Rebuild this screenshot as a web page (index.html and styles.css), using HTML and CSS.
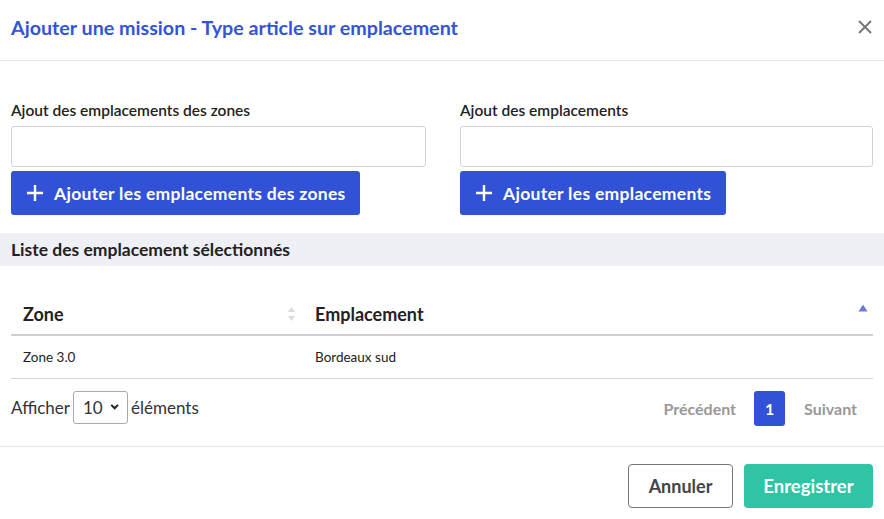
FILE: index.html
```html
<!DOCTYPE html>
<html lang="fr">
<head>
<meta charset="utf-8">
<link rel="stylesheet" href="styles.css">
</head>
<body>
<div class="modal">
  <header class="modal-header">
    <h1 class="modal-title">Ajouter une mission - Type article sur emplacement</h1>
    <button class="close" aria-label="Fermer">
      <svg width="14" height="14" viewBox="0 0 14 14"><path d="M1 1L13 13M13 1L1 13" stroke="#777" stroke-width="2" fill="none"/></svg>
    </button>
  </header>
  <div class="modal-body">
    <div class="fields">
      <div class="field field-left">
        <label class="label">Ajout des emplacements des zones</label>
        <input class="input" type="text">
        <button class="btn-primary btn-zones"><span class="plus"><svg width="18" height="18" viewBox="0 0 18 18"><path d="M9 1V17M1 9H17" stroke="#fff" stroke-width="2.4"/></svg></span>Ajouter les emplacements des zones</button>
      </div>
      <div class="field field-right">
        <label class="label">Ajout des emplacements</label>
        <input class="input" type="text">
        <button class="btn-primary btn-empl"><span class="plus"><svg width="18" height="18" viewBox="0 0 18 18"><path d="M9 1V17M1 9H17" stroke="#fff" stroke-width="2.4"/></svg></span>Ajouter les emplacements</button>
      </div>
    </div>
    <div class="section-bar">Liste des emplacement sélectionnés</div>
    <div class="table-wrap">
      <table class="table">
        <thead>
          <tr>
            <th class="col-zone">Zone<span class="sort-both"><svg width="9" height="16" viewBox="0 0 9 16"><path d="M4.5 1L8 6H1Z M4.5 15L8 10H1Z" fill="#dcdcdc"/></svg></span></th>
            <th class="col-empl">Emplacement<span class="sort-asc"><svg width="10" height="8" viewBox="0 0 10 8"><path d="M5 0.5L9.5 7.5H0.5Z" fill="#6a78d8"/></svg></span></th>
          </tr>
        </thead>
        <tbody>
          <tr>
            <td>Zone 3.0</td>
            <td>Bordeaux sud</td>
          </tr>
        </tbody>
      </table>
      <div class="table-footer">
        <div class="length">
          <span>Afficher</span>
          <span class="select">10<svg width="11" height="8" viewBox="0 0 11 8"><path d="M1.5 1.5L5.5 5.5L9.5 1.5" stroke="#222" stroke-width="2.4" fill="none"/></svg></span>
          <span>éléments</span>
        </div>
        <div class="pagination">
          <span class="page-link disabled">Précédent</span>
          <span class="page-current">1</span>
          <span class="page-link disabled">Suivant</span>
        </div>
      </div>
    </div>
  </div>
  <footer class="modal-footer">
    <button class="btn-cancel">Annuler</button>
    <button class="btn-save">Enregistrer</button>
  </footer>
</div>
</body>
</html>
```

FILE: styles.css
```css
* { box-sizing: border-box; }
html, body { margin: 0; padding: 0; background: #fff; }
body {
  font-family: Lato, "Open Sans", "Liberation Sans", sans-serif;
  color: #222;
  width: 884px;
  height: 519px;
  overflow: hidden;
}
.modal { width: 884px; }
.modal-header {
  height: 61px;
  display: flex;
  align-items: center;
  justify-content: space-between;
  padding: 0 12px 6px 11px;
  border-bottom: 1px solid #e1e5ec;
}
.modal-title {
  margin: 0;
  font-size: 19.7px;
  font-weight: 700;
  color: #3553d6;
}
.close {
  border: 0;
  background: none;
  padding: 0;
  width: 14px;
  height: 14px;
  display: flex;
}
.modal-body { padding: 40px 0 0; }
.fields {
  display: flex;
  padding: 0 11px;
  gap: 34px;
}
.field { display: flex; flex-direction: column; align-items: flex-start; }
.field-left { width: 415px; }
.field-right { width: 413px; }
.label {
  font-size: 15.5px;
  font-weight: 600;
  color: #222;
  line-height: 18px;
  margin-bottom: 7px;
}
.input {
  width: 100%;
  height: 41px;
  border: 1px solid #d4d4d4;
  border-radius: 3px;
  margin: 0 0 4px;
}
.btn-primary {
  height: 44px;
  border: 0;
  border-radius: 3px;
  background: #3152d6;
  color: #fff;
  font-family: inherit;
  font-size: 17.5px;
  font-weight: 700;
  display: flex;
  align-items: center;
  padding: 0 10px 0 15px;
  letter-spacing: 0.3px;
  white-space: nowrap;
}
.btn-zones { width: 349px; }
.btn-empl { width: 266px; }
.plus { display: flex; margin-right: 10px; }
.section-bar {
  margin-top: 18px;
  height: 33px;
  background: #eef0f5;
  font-size: 17.5px;
  font-weight: 700;
  color: #222;
  padding: 0 11px;
  display: flex;
  align-items: center;
}
.table-wrap { padding: 27px 11px 0; }
.table {
  width: 100%;
  border-collapse: collapse;
}
.table th {
  text-align: left;
  font-size: 18px;
  font-weight: 700;
  color: #222;
  height: 42px;
  padding: 0 12px;
  border-bottom: 2px solid #cfcfcf;
  position: relative;
}
.col-zone { width: 292px; }
.sort-both { position: absolute; right: 7px; top: 13px; display: flex; }
.sort-asc { position: absolute; right: 5px; top: 11px; display: flex; }
.table td {
  font-size: 13.5px;
  height: 43px;
  padding: 0 12px;
  border-bottom: 1px solid #d6d6d6;
}
.table-footer {
  display: flex;
  justify-content: space-between;
  align-items: flex-start;
  padding-top: 12px;
  height: 67px;
}
.length {
  display: flex;
  align-items: center;
  gap: 3px;
  font-size: 17px;
  color: #333;
  height: 33px;
}
.select {
  display: inline-flex;
  align-items: center;
  gap: 7px;
  height: 33px;
  width: 55px;
  padding: 0 8px 0 9px;
  border: 1px solid #aaa;
  border-radius: 3px;
  font-size: 17px;
}
.pagination {
  display: flex;
  align-items: center;
  height: 36px;
  margin-right: 16px;
}
.page-link {
  font-size: 16px;
  font-weight: 700;
  color: #999;
}
.page-current {
  width: 31px;
  height: 35px;
  margin: 0 19px 0 18px;
  background: #3152d6;
  color: #fff;
  border-radius: 3px;
  font-size: 16px;
  font-weight: 700;
  display: flex;
  align-items: center;
  justify-content: center;
}
.modal-footer {
  border-top: 1px solid #e1e5ec;
  display: flex;
  justify-content: flex-end;
  gap: 11px;
  padding: 17px 11px 0;
  height: 80px;
}
.btn-cancel, .btn-save {
  height: 44px;
  border-radius: 4px;
  font-family: inherit;
  font-size: 18px;
  font-weight: 700;
}
.btn-cancel {
  width: 105px;
  background: #fff;
  border: 1.5px solid #777;
  color: #444;
}
.btn-save {
  width: 129px;
  background: #2ec4a4;
  border: 0;
  color: #fff;
  font-size: 18.5px;
}
```
